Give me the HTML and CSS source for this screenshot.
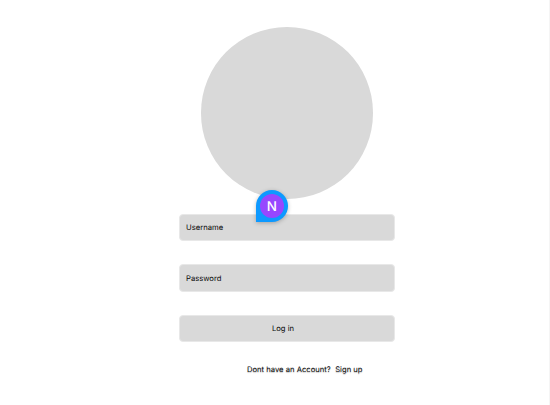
FILE: index.html
```html
<!DOCTYPE html>
<html lang="en">
<head>
<meta charset="utf-8">
<title>Log in</title>
<link rel="stylesheet" href="styles.css">
</head>
<body>
<main class="login">
  <div class="avatar">
    <div class="comment-pin"><span class="comment-initial">N</span></div>
  </div>
  <form class="form">
    <div class="field">Username</div>
    <div class="field password">Password</div>
    <div class="field submit">Log in</div>
  </form>
  <p class="signup"><span>Dont have an Account?</span><span>Sign up</span></p>
</main>
</body>
</html>
```

FILE: styles.css
```css
* { box-sizing: border-box; }
body {
  margin: 0;
  height: 405px;
  background: #fff;
  border-right: 1px solid #f5f5f5;
  color: #080808;
  font: 7.65px/10px Inter, sans-serif;
  text-rendering: geometricPrecision;
  overflow: hidden;
}
.login {
  width: 216px;
  margin-left: 179px;
  padding-top: 27px;
}
.avatar {
  position: relative;
  width: 171.5px;
  height: 171.5px;
  margin: 0 auto;
  border-radius: 50%;
  background: #d9d9d9;
}
.comment-pin {
  position: absolute;
  left: 54.5px;
  top: 163px;
  width: 32px;
  height: 32px;
  padding: 4px;
  border-radius: 16px 16px 16px 0;
  background: #0d99ff;
  box-shadow: 0 1px 4px rgba(0, 0, 0, .25);
}
.comment-initial {
  display: block;
  width: 24px;
  height: 24px;
  border-radius: 50%;
  background: #9747ff;
  color: #fff;
  font-size: 13.5px;
  font-weight: 500;
  line-height: 26px;
  text-align: center;
}
.form {
  display: grid;
  grid-template-rows: 27px 28px 27px;
  gap: 23px;
  margin-top: 15.5px;
}
.field {
  padding: 0 6px;
  border: 1px solid #e8e8e8;
  border-radius: 4px;
  background: #d9d9d9;
  line-height: 25px;
}
.password {
  padding-top: 1px;
}
.submit {
  padding-right: 14px;
  text-align: center;
}
.signup {
  display: flex;
  gap: 4.5px;
  margin: 22.5px 0 0 68px;
  white-space: nowrap;
  text-shadow: 0 1px 1px rgba(0, 0, 0, .25);
}
```
